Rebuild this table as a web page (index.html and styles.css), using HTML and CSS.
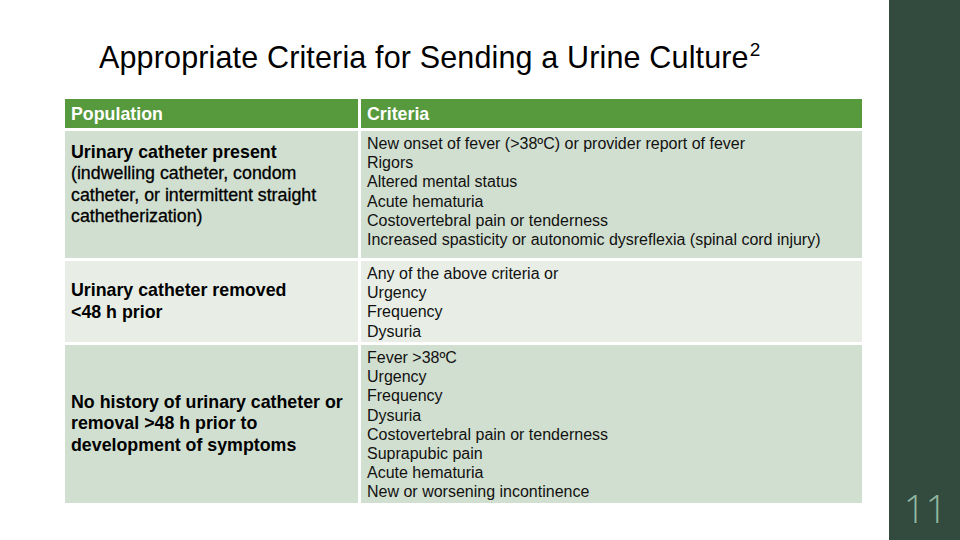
FILE: index.html
```html
<!DOCTYPE html>
<html>
<head>
<meta charset="utf-8">
<link rel="stylesheet" href="styles.css">
</head>
<body>
<div class="slide">
  <main class="content">
    <h1 class="title">Appropriate Criteria for Sending a Urine Culture<sup>2</sup></h1>
    <div class="table">
      <div class="cell head">Population</div>
      <div class="cell head">Criteria</div>

      <div class="cell pop odd first"><div>Urinary catheter present<br><span class="note">(indwelling catheter, condom catheter, or intermittent straight cathetherization)</span></div></div>
      <div class="cell crit odd">New onset of fever (&gt;38ºC) or provider report of fever<br>Rigors<br>Altered mental status<br>Acute hematuria<br>Costovertebral pain or tenderness<br>Increased spasticity or autonomic dysreflexia (spinal cord injury)</div>

      <div class="cell pop even"><div>Urinary catheter removed<br>&lt;48 h prior</div></div>
      <div class="cell crit even">Any of the above criteria or<br>Urgency<br>Frequency<br>Dysuria</div>

      <div class="cell pop odd"><div>No history of urinary catheter or removal &gt;48 h prior to development of symptoms</div></div>
      <div class="cell crit odd">Fever &gt;38ºC<br>Urgency<br>Frequency<br>Dysuria<br>Costovertebral pain or tenderness<br>Suprapubic pain<br>Acute hematuria<br>New or worsening incontinence</div>
    </div>
  </main>
  <aside class="side">
    <div class="pagenum">11</div>
  </aside>
</div>
</body>
</html>
```
FILE: styles.css
```css
html, body {
  margin: 0;
  padding: 0;
  background: #ffffff;
}
.slide {
  width: 960px;
  height: 540px;
  display: flex;
  font-family: "Liberation Sans", Arial, sans-serif;
  overflow: hidden;
}
.content {
  width: 889px;
  flex: none;
  padding: 37px 0 0 65px;
  box-sizing: border-box;
}
.title {
  margin: 0 0 0 34px;
  font-weight: normal;
  font-size: 30.5px;
  letter-spacing: 0.15px;
  line-height: 40px;
  color: #000;
  height: 62px;
  white-space: nowrap;
}
.title sup {
  font-size: 19px;
  vertical-align: 0;
  position: relative;
  top: -12px;
  margin-left: 1px;
}
.table {
  display: grid;
  grid-template-columns: 293px 501px;
  grid-template-rows: 29px 127px 81px 158px;
  gap: 3px;
}
.cell {
  box-sizing: border-box;
  padding: 0 6px;
  color: #000;
}
.head {
  background: #57993d;
  color: #fff;
  font-weight: bold;
  font-size: 17.8px;
  display: flex;
  align-items: center;
  padding-top: 1px;
}
.odd { background: #d1dfd0; }
.even { background: #e8eee6; }
.pop {
  font-weight: bold;
  font-size: 17.8px;
  line-height: 21.3px;
  display: flex;
  align-items: center;
}
.pop .note {
  font-weight: normal;
  -webkit-text-stroke: 0.3px #000;
}
.pop.first {
  padding-bottom: 20px;
}
.crit {
  font-size: 16px;
  line-height: 19.2px;
  padding-top: 3px;
  color: #111;
}
.side {
  flex: 1;
  background: #334a3f;
  display: flex;
  align-items: flex-end;
  justify-content: center;
}
.pagenum {
  font-family: "Open Sans", "Liberation Sans", sans-serif;
  font-weight: 300;
  font-size: 38px;
  color: #8fb8a1;
  line-height: 40px;
  margin-bottom: 12px;
  margin-left: 2px;
}
```
